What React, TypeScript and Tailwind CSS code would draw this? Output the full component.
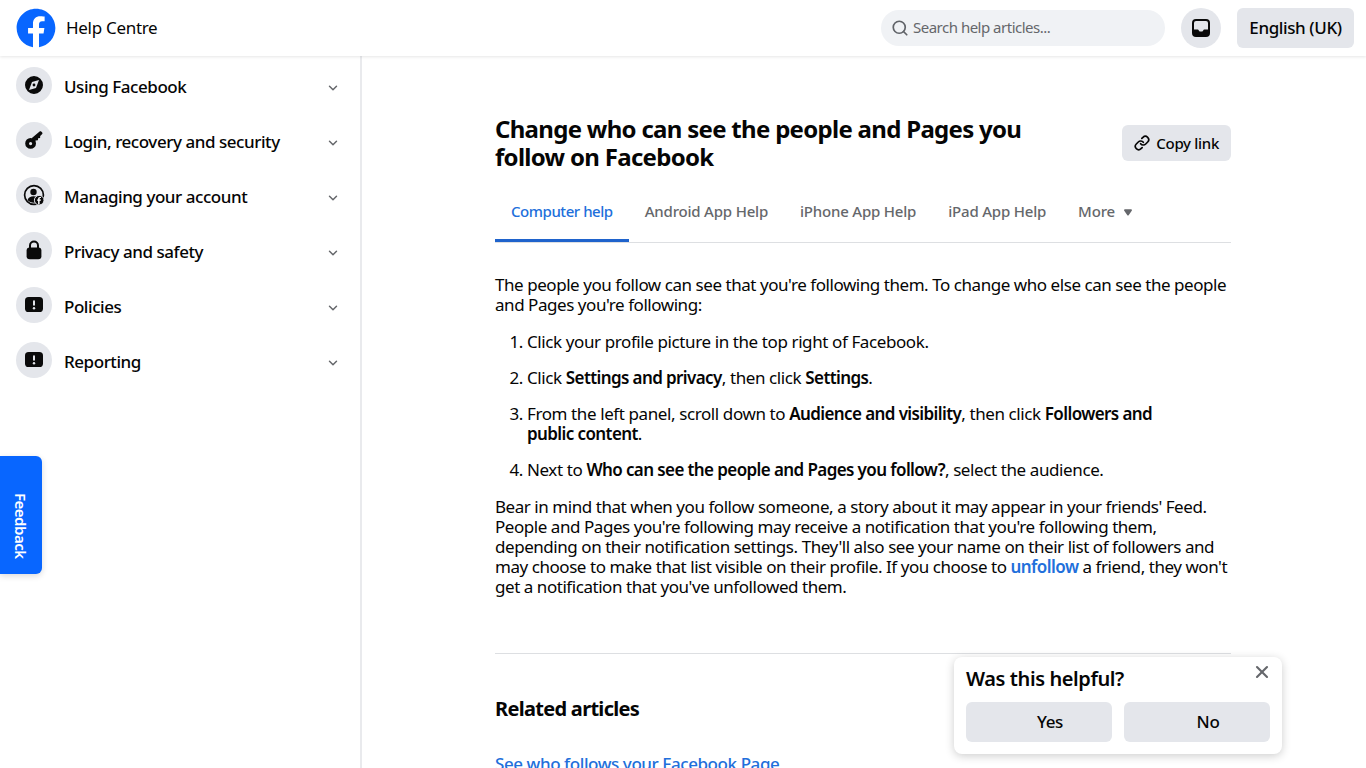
import { ChevronDown, Link as LinkIcon, Search, X } from "lucide-react";
import { FaFacebook } from "react-icons/fa";

const CompassIcon = () => (
  <svg width="20" height="20" viewBox="0 0 20 20">
    <path
      fillRule="evenodd"
      fill="#0a0a0a"
      d="M10 1a9 9 0 1 1 0 18 9 9 0 0 1 0-18ZM15 5l-7 1.900L5 15l7-1.900L15 5Z"
    />
    <circle cx="10" cy="10" r="1.400" fill="#0a0a0a" />
  </svg>
);

const KeyIcon = () => (
  <svg width="20" height="20" viewBox="0 0 20 20">
    <path
      fillRule="evenodd"
      fill="#0a0a0a"
      d="M6.600 8a5.400 5.400 0 1 1 0 10.800A5.400 5.400 0 0 1 6.600 8Zm0 4a1.600 1.600 0 1 0 0 3.200 1.600 1.600 0 0 0 0-3.200Z"
    />
    <path fill="#0a0a0a" d="M7.600 8.200 15.600 1.600c.5-.4 1.100-.4 1.600 0l1 1c.4.4.4 1 0 1.400l-2 2-.1 2-2 .2-.2 2-2.200.2-1 1-3.100-3.200Z" />
  </svg>
);

const AccountIcon = () => (
  <svg width="22" height="22" viewBox="0 0 22 22">
    <circle cx="11" cy="11" r="9.400" fill="none" stroke="#0a0a0a" strokeWidth="1.700" />
    <circle cx="10.500" cy="8" r="3.200" fill="#0a0a0a" />
    <path fill="#0a0a0a" d="M4.600 16c.8-2.600 3-3.800 5.900-3.800 1.400 0 2.600.3 3.600.9l-2.400 5.600c-3 .2-5.500-.8-7.100-2.700Z" />
    <circle cx="16.200" cy="16.200" r="4.800" fill="#0a0a0a" stroke="#e4e6eb" strokeWidth="1" />
    <path fill="#fff" d="M16.600 20v-3.200h1.200l.2-1.300h-1.400v-.8c0-.4.2-.6.6-.6h.8v-1.200h-1.100c-1.200 0-1.800.7-1.800 1.800v.8h-1v1.300h1V20h1.500Z" />
  </svg>
);

const LockIcon = () => (
  <svg width="20" height="20" viewBox="0 0 20 20">
    <path fill="none" stroke="#0a0a0a" strokeWidth="2" d="M6 9V5.600a4 4 0 0 1 8 0V9" />
    <rect x="2.600" y="7.600" width="14.800" height="11.600" rx="3" fill="#0a0a0a" />
  </svg>
);

const AlertIcon = () => (
  <svg width="20" height="20" viewBox="0 0 20 20">
    <rect x="1" y="2" width="18" height="15" rx="3.600" fill="#0a0a0a" />
    <rect x="9" y="5.200" width="2" height="5.600" rx="1" fill="#e4e6eb" />
    <circle cx="10" cy="13.200" r="1.200" fill="#e4e6eb" />
  </svg>
);

const InboxIcon = () => (
  <svg width="20" height="20" viewBox="0 0 20 20">
    <path
      fillRule="evenodd"
      fill="#0a0a0a"
      d="M5 1h10a4 4 0 0 1 4 4v10a4 4 0 0 1-4 4H5a4 4 0 0 1-4-4V5a4 4 0 0 1 4-4Zm0 2a2 2 0 0 0-2 2v6.600h3.600c.6 0 1 .3 1.200.8.4.8 1.200 1.200 2.200 1.200s1.800-.4 2.200-1.200c.2-.5.6-.8 1.200-.8H17V5a2 2 0 0 0-2-2H5Z"
    />
  </svg>
);

const topics = [
  { label: "Using Facebook", icon: <CompassIcon /> },
  { label: "Login, recovery and security", icon: <KeyIcon /> },
  { label: "Managing your account", icon: <AccountIcon /> },
  { label: "Privacy and safety", icon: <LockIcon /> },
  { label: "Policies", icon: <AlertIcon /> },
  { label: "Reporting", icon: <AlertIcon /> },
];

const tabs = ["Android App Help", "iPhone App Help", "iPad App Help"];

export default function App() {
  return (
    <div className="relative flex h-screen flex-col overflow-hidden bg-white font-['Noto_Sans',sans-serif] text-[#050505]">
      <header className="z-10 flex h-14 shrink-0 items-center justify-between bg-white pl-4 pr-3 shadow-[0_1px_3px_rgba(0,0,0,0.1)]">
        <div className="flex items-center gap-2.5">
          <FaFacebook className="h-10 w-10 text-[#0866ff]" />
          <span className="text-[17px] tracking-[-0.3px]">Help Centre</span>
        </div>
        <div className="flex items-center">
          <div className="flex h-9 w-[284px] items-center gap-1 rounded-full bg-[#f0f2f5] pl-2.5">
            <Search size={18} strokeWidth={2.25} className="-mt-px text-[#606368]" />
            <span className="-mt-0.5 text-[15px] tracking-[-0.5px] text-[#65676b]">Search help articles...</span>
          </div>
          <div className="ml-4 flex h-10 w-10 items-center justify-center rounded-full bg-[#e4e6eb]">
            <InboxIcon />
          </div>
          <div className="ml-4 flex h-10 w-[117px] items-center justify-center rounded-md bg-[#e4e6eb] text-[17px] font-medium tracking-[-0.4px]">
            English (UK)
          </div>
        </div>
      </header>

      <div className="flex min-h-0 flex-1">
        <aside className="w-[362px] shrink-0 border-r-2 border-[#e9eaed] pl-4 pr-5">
          <ul className="flex flex-col gap-[19px] pt-[13px]">
            {topics.map((t) => (
              <li key={t.label} className="flex h-9 items-center">
                <div className="mb-1 flex h-9 w-9 items-center justify-center rounded-full bg-[#e4e6eb]">{t.icon}</div>
                <span className="ml-3 flex-1 text-[17px] font-medium tracking-[-0.45px]">{t.label}</span>
                <ChevronDown size={14} strokeWidth={2.5} className="mt-0.5 text-[#65676b]" />
              </li>
            ))}
          </ul>
        </aside>

        <main className="min-w-0 flex-1 pl-[133px]">
          <div className="w-[736px]">
            <div className="flex items-center justify-between pt-[59px]">
              <h1 className="w-[560px] text-[24px] font-bold leading-7 tracking-[-0.7px]">
                Change who can see the people and Pages you follow on Facebook
              </h1>
              <button className="flex h-9 items-center gap-1.5 rounded-md bg-[#e4e6eb] px-3 text-[15px] font-medium tracking-[-0.3px]">
                <LinkIcon size={16} strokeWidth={2.5} />
                Copy link
              </button>
            </div>

            <nav className="mt-[12px] flex border-b border-[#dddfe2] pb-0 text-[15px] font-medium tracking-[-0.2px] text-[#65676b]">
              <span className="flex h-[59px] items-center border-b-[3px] border-[#1f63cc] px-4 pb-0.5 pt-[3px] tracking-[-0.45px] text-[#216fdb]">
                Computer help
              </span>
              {tabs.map((t) => (
                <span key={t} className="flex h-[59px] items-center px-4 pb-0.5">
                  {t}
                </span>
              ))}
              <span className="flex h-[59px] items-center gap-[9px] px-4 pb-0.5">
                More
                <svg width="8" height="7" viewBox="0 0 10 8" className="mt-0.5">
                  <path fill="#65676b" d="M1.200 0h7.600c1 0 1.500 1 .9 1.800L5.800 7.400c-.4.500-1.200.500-1.600 0L.3 1.800C-.3 1 .2 0 1.200 0Z" />
                </svg>
              </span>
            </nav>

            <div className="mt-8 text-[17px] leading-5 tracking-[-0.45px]">
              <p>
                The people you follow can see that you're following them. To change who else can see the people and Pages
                you're following:
              </p>
              <ol className="mt-[17px] flex list-decimal flex-col gap-4 pl-8 tracking-[-0.4px]">
                <li>Click your profile picture in the top right of Facebook.</li>
                <li>
                  Click <b className="font-semibold tracking-[-0.6px]">Settings and privacy</b>, then click{" "}
                  <b className="font-semibold tracking-[-0.6px]">Settings</b>.
                </li>
                <li className="pr-[70px]">
                  From the left panel, scroll down to <b className="font-semibold tracking-[-0.6px]">Audience and visibility</b>,
                  then click <b className="font-semibold tracking-[-0.6px]">Followers and public content</b>.
                </li>
                <li>
                  Next to <b className="font-semibold tracking-[-0.6px]">Who can see the people and Pages you follow?</b>, select
                  the audience.
                </li>
              </ol>
              <p className="mt-[17px]">
                Bear in mind that when you follow someone, a story about it may appear in your friends' Feed. People and Pages
                you're following may receive a notification that you're following them, depending on their notification
                settings. They'll also see your name on their list of followers and may choose to make that list visible on
                their profile. If you choose to <span className="font-semibold tracking-[-0.55px] text-[#216fdb]">unfollow</span>{" "}
                a friend, they won't get a notification that you've unfollowed them.
              </p>
            </div>

            <hr className="mt-[56px] border-[#dddfe2]" />
            <h2 className="mt-[43px] text-[20px] font-bold leading-6 tracking-[-0.7px]">Related articles</h2>
            <p className="mt-[33px] text-[17px] font-medium leading-5 tracking-[-0.42px] text-[#216fdb]">
              See who follows your Facebook Page
            </p>
          </div>
        </main>
      </div>

      <button className="absolute left-0 top-[456px] flex h-[118px] w-[42px] items-center justify-center rounded-r-md bg-[#0866ff] pt-[22px] shadow-[0_2px_6px_rgba(0,0,0,0.15)]">
        <span className="text-[15px] font-semibold tracking-[-0.5px] text-white [writing-mode:vertical-rl]">Feedback</span>
      </button>

      <div className="absolute left-[954px] top-[657px] w-[328px] rounded-lg bg-white px-3 pb-3 pt-2.5 shadow-[0_2px_10px_rgba(0,0,0,0.2)]">
        <X size={20} strokeWidth={2.5} className="absolute right-[10px] top-[5px] text-[#65676b]" />
        <p className="text-[20px] font-semibold leading-6 tracking-[-0.4px]">Was this helpful?</p>
        <div className="mt-[11px] grid grid-cols-2 gap-3">
          <button className="h-10 rounded-md bg-[#e4e6eb] pl-[22px] text-[17px] font-medium tracking-[-0.4px]">Yes</button>
          <button className="h-10 rounded-md bg-[#e4e6eb] pl-[22px] text-[17px] font-medium tracking-[-0.4px]">No</button>
        </div>
      </div>
    </div>
  );
}
